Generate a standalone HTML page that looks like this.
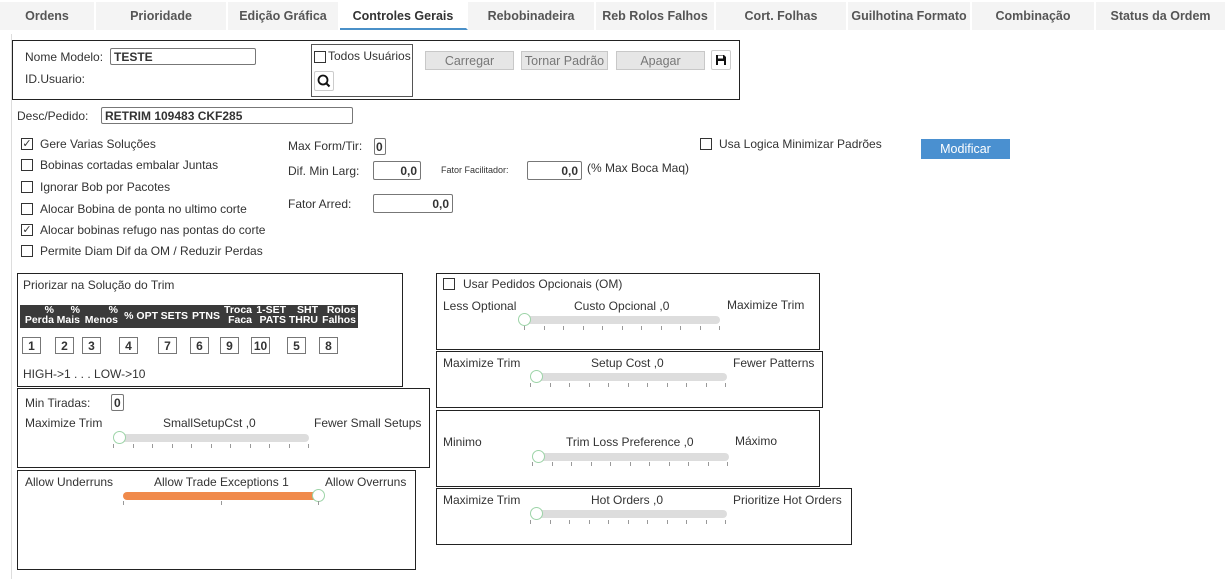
<!DOCTYPE html><html><head><meta charset="utf-8"><style>
body{margin:0;width:1225px;height:579px;background:#fff;font-family:"Liberation Sans",sans-serif;font-size:12px;color:#333;position:relative;overflow:hidden}
.a{position:absolute;white-space:nowrap}
.tab{position:absolute;top:2px;height:28px;background:#f4f4f4;color:#555;font-weight:bold;font-size:12.5px;text-align:center;line-height:28px;border-right:2px solid #fff}
.box{position:absolute;border:1px solid #222}
.inp{position:absolute;border:1px solid #777;background:#fff;font-weight:bold;font-size:12px;height:17px;line-height:17px;box-sizing:border-box;padding:0 3px;border-radius:2px}
.cb{position:absolute;width:10px;height:10px;border:1px solid #333;background:#fff;font-size:11px;line-height:10px;text-align:center}
.btn{position:absolute;height:19px;background:#e6e6e6;border:1px solid #c8c8c8;color:#777;text-align:center;line-height:19px;font-size:12.5px;box-sizing:border-box}
.tr{position:absolute;height:8px;background:#ddd;border-radius:4px}
.h{position:absolute;width:13px;height:13px;border-radius:50%;border:1px solid #9dd4a8;background:#fff;box-sizing:border-box}
.tk{position:absolute;height:4px;display:flex;justify-content:space-between}
.tk i{width:1px;height:4px;background:#999}
.th{position:absolute;top:305px;height:23px;background:#3a3a3a;color:#fff;font-weight:bold;font-size:10.5px;line-height:10px;text-align:right}
.n{position:absolute;top:337px;width:19px;height:17px;border:1px solid #777;font-weight:bold;text-align:center;line-height:17px;box-sizing:border-box;background:#fff}
</style></head><body>
<div class="tab" style="left:0;width:94px">Ordens</div>
<div class="tab" style="left:96px;width:130px">Prioridade</div>
<div class="tab" style="left:228px;width:110px">Edição Gráfica</div>
<div class="tab" style="left:340px;width:126px;background:#fff;color:#333;border-bottom:2px solid #4a90c8;height:26px">Controles Gerais</div>
<div class="tab" style="left:468px;width:126px">Rebobinadeira</div>
<div class="tab" style="left:596px;width:118px">Reb Rolos Falhos</div>
<div class="tab" style="left:716px;width:130px">Cort. Folhas</div>
<div class="tab" style="left:848px;width:122px">Guilhotina Formato</div>
<div class="tab" style="left:972px;width:122px">Combinação</div>
<div class="tab" style="left:1096px;width:129px">Status da Ordem</div>
<div class="a" style="left:11px;top:34px;width:1px;height:545px;background:#ddd"></div>

<div class="box" style="left:12px;top:40px;width:726px;height:58px"></div>
<div class="a" style="left:25px;top:50px">Nome Modelo:</div>
<div class="inp" style="left:110px;top:48px;width:146px">TESTE</div>
<div class="a" style="left:25px;top:72px">ID.Usuario:</div>
<div class="a" style="left:311px;top:44px;width:100px;height:51px;border:1px solid #555"></div>
<div class="cb" style="left:314px;top:51px"></div>
<div class="a" style="left:328px;top:49px">Todos Usuários</div>
<div class="a" style="left:314px;top:71px;width:18px;height:18px;border:1px solid #ccc;border-radius:2px"><svg width="18" height="18"><circle cx="8" cy="8" r="4.5" fill="none" stroke="#111" stroke-width="1.8"/><line x1="11" y1="11" x2="14.5" y2="14.5" stroke="#111" stroke-width="2"/></svg></div>
<div class="btn" style="left:425px;top:51px;width:89px">Carregar</div>
<div class="btn" style="left:521px;top:51px;width:87px">Tornar Padrão</div>
<div class="btn" style="left:616px;top:51px;width:89px">Apagar</div>
<div class="a" style="left:711px;top:50px;width:18px;height:18px;border:1px solid #ccc;border-radius:2px"><svg width="18" height="18"><path d="M4 4h8l2 2v8H4z" fill="#111"/><rect x="6" y="4.5" width="5" height="3" fill="#fff"/><rect x="6" y="10" width="6" height="4" fill="#fff"/></svg></div>

<div class="a" style="left:17px;top:109px">Desc/Pedido:</div>
<div class="inp" style="left:101px;top:107px;width:252px">RETRIM 109483 CKF285</div>

<div class="cb" style="left:21px;top:138px">✓</div><div class="a" style="left:40px;top:137px">Gere Varias Soluções</div>
<div class="cb" style="left:21px;top:159px"></div><div class="a" style="left:40px;top:158px">Bobinas cortadas embalar Juntas</div>
<div class="cb" style="left:21px;top:181px"></div><div class="a" style="left:40px;top:180px">Ignorar Bob por Pacotes</div>
<div class="cb" style="left:21px;top:203px"></div><div class="a" style="left:40px;top:202px">Alocar Bobina de ponta no ultimo corte</div>
<div class="cb" style="left:21px;top:224px">✓</div><div class="a" style="left:40px;top:223px">Alocar bobinas refugo nas pontas do corte</div>
<div class="cb" style="left:21px;top:245px"></div><div class="a" style="left:40px;top:244px">Permite Diam Dif da OM / Reduzir Perdas</div>

<div class="a" style="left:288px;top:139px">Max Form/Tir:</div>
<div class="inp" style="left:374px;top:138px;width:12px;padding:0 1px">0</div>
<div class="a" style="left:288px;top:164px">Dif. Min Larg:</div>
<div class="inp" style="left:373px;top:161px;width:48px;text-align:right;height:19px;line-height:19px">0,0</div>
<div class="a" style="left:441px;top:165px;font-size:9px">Fator Facilitador:</div>
<div class="inp" style="left:527px;top:161px;width:55px;text-align:right;height:19px;line-height:19px">0,0</div>
<div class="a" style="left:587px;top:161px">(% Max Boca Maq)</div>
<div class="a" style="left:288px;top:197px">Fator Arred:</div>
<div class="inp" style="left:373px;top:194px;width:80px;text-align:right;height:19px;line-height:19px">0,0</div>
<div class="cb" style="left:700px;top:138px"></div><div class="a" style="left:719px;top:137px">Usa Logica Minimizar Padrões</div>
<div class="a" style="left:921px;top:139px;width:89px;height:20px;background:#4a90d0;color:#fff;text-align:center;line-height:20px;font-size:12.5px">Modificar</div>

<div class="box" style="left:17px;top:273px;width:384px;height:112px"></div>
<div class="a" style="left:23px;top:278px">Priorizar na Solução do Trim</div>
<div class="a" style="left:20px;top:305px;width:338px;height:23px;background:#3a3a3a"></div>
<div class="th" style="left:20px;width:34px">%<br>Perda</div>
<div class="th" style="left:56px;width:24px">%<br>Mais</div>
<div class="th" style="left:82px;width:36px">%<br>Menos</div>
<div class="th" style="left:120px;width:38px;line-height:23px">% OPT</div>
<div class="th" style="left:160px;width:28px;line-height:23px">SETS</div>
<div class="th" style="left:190px;width:30px;line-height:23px">PTNS</div>
<div class="th" style="left:222px;width:30px">Troca<br>Faca</div>
<div class="th" style="left:254px;width:32px">1-SET<br>PATS</div>
<div class="th" style="left:288px;width:30px">SHT<br>THRU</div>
<div class="th" style="left:320px;width:36px">Rolos<br>Falhos</div>
<div class="n" style="left:22px">1</div><div class="n" style="left:55px">2</div><div class="n" style="left:82px">3</div><div class="n" style="left:119px">4</div><div class="n" style="left:158px">7</div><div class="n" style="left:190px">6</div><div class="n" style="left:220px">9</div><div class="n" style="left:251px">10</div><div class="n" style="left:287px">5</div><div class="n" style="left:319px">8</div>
<div class="a" style="left:23px;top:367px">HIGH-&gt;1 . . . LOW-&gt;10</div>

<div class="box" style="left:17px;top:388px;width:411px;height:78px"></div>
<div class="a" style="left:25px;top:396px">Min Tiradas:</div>
<div class="inp" style="left:111px;top:394px;width:13px;padding:0 2px">0</div>
<div class="a" style="left:25px;top:416px">Maximize Trim</div>
<div class="a" style="left:163px;top:416px">SmallSetupCst ,0</div>
<div class="a" style="left:314px;top:416px">Fewer Small Setups</div>
<div class="tr" style="left:115px;top:434px;width:194px"></div><div class="h" style="left:113px;top:431px"></div>
<div class="tk" style="left:113px;top:444px;width:196px"><i></i><i></i><i></i><i></i><i></i><i></i><i></i><i></i><i></i><i></i><i></i></div>

<div class="box" style="left:17px;top:470px;width:397px;height:98px"></div>
<div class="a" style="left:25px;top:475px">Allow Underruns</div>
<div class="a" style="left:154px;top:475px">Allow Trade Exceptions 1</div>
<div class="a" style="left:325px;top:475px">Allow Overruns</div>
<div class="tr" style="left:123px;top:492px;width:196px;background:#f08a4b"></div><div class="h" style="left:312px;top:489px"></div>
<div class="tk" style="left:123px;top:501px;width:196px"><i></i><i></i><i></i></div>

<div class="box" style="left:436px;top:273px;width:382px;height:75px"></div>
<div class="cb" style="left:443px;top:278px"></div><div class="a" style="left:463px;top:277px">Usar Pedidos Opcionais (OM)</div>
<div class="a" style="left:443px;top:299px">Less Optional</div>
<div class="a" style="left:574px;top:299px">Custo Opcional ,0</div>
<div class="a" style="left:727px;top:298px">Maximize Trim</div>
<div class="tr" style="left:520px;top:316px;width:200px"></div><div class="h" style="left:518px;top:313px"></div>
<div class="tk" style="left:524px;top:326px;width:196px"><i></i><i></i><i></i><i></i><i></i><i></i><i></i><i></i><i></i><i></i><i></i></div>

<div class="box" style="left:436px;top:351px;width:385px;height:55px"></div>
<div class="a" style="left:443px;top:356px">Maximize Trim</div>
<div class="a" style="left:591px;top:356px">Setup Cost ,0</div>
<div class="a" style="left:733px;top:356px">Fewer Patterns</div>
<div class="tr" style="left:532px;top:373px;width:195px"></div><div class="h" style="left:530px;top:370px"></div>
<div class="tk" style="left:530px;top:383px;width:196px"><i></i><i></i><i></i><i></i><i></i><i></i><i></i><i></i><i></i><i></i><i></i></div>

<div class="box" style="left:436px;top:410px;width:382px;height:75px"></div>
<div class="a" style="left:443px;top:435px">Minimo</div>
<div class="a" style="left:566px;top:435px">Trim Loss Preference ,0</div>
<div class="a" style="left:735px;top:434px">Máximo</div>
<div class="tr" style="left:534px;top:453px;width:195px"></div><div class="h" style="left:532px;top:450px"></div>
<div class="tk" style="left:532px;top:462px;width:196px"><i></i><i></i><i></i><i></i><i></i><i></i><i></i><i></i><i></i><i></i><i></i></div>

<div class="box" style="left:436px;top:488px;width:414px;height:55px"></div>
<div class="a" style="left:443px;top:493px">Maximize Trim</div>
<div class="a" style="left:591px;top:493px">Hot Orders ,0</div>
<div class="a" style="left:733px;top:493px">Prioritize Hot Orders</div>
<div class="tr" style="left:532px;top:510px;width:195px"></div><div class="h" style="left:530px;top:507px"></div>
<div class="tk" style="left:530px;top:520px;width:196px"><i></i><i></i><i></i><i></i><i></i><i></i><i></i><i></i><i></i><i></i><i></i></div>
</body></html>
